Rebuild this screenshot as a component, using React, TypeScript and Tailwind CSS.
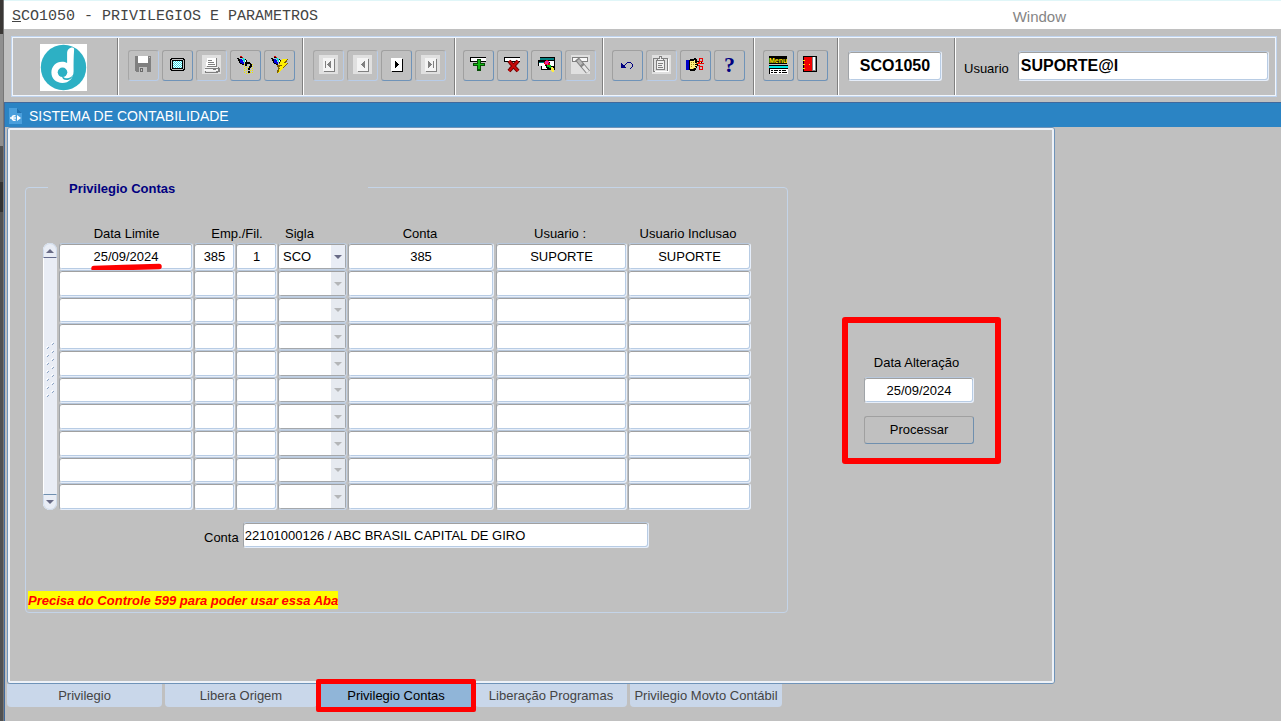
import type { ReactNode } from "react";

type Row = {
  dataLimite: string;
  empresa: string;
  filial: string;
  sigla: string;
  conta: string;
  usuario: string;
  usuarioInclusao: string;
};

const EMPTY_ROW: Row = {
  dataLimite: "",
  empresa: "",
  filial: "",
  sigla: "",
  conta: "",
  usuario: "",
  usuarioInclusao: "",
};

const ROWS: Row[] = [
  {
    dataLimite: "25/09/2024",
    empresa: "385",
    filial: "1",
    sigla: "SCO",
    conta: "385",
    usuario: "SUPORTE",
    usuarioInclusao: "SUPORTE",
  },
  ...Array.from({ length: 9 }, () => EMPTY_ROW),
];

const TABS = [
  { label: "Privilegio", active: false },
  { label: "Libera Origem", active: false },
  { label: "Privilegio Contas", active: true },
  { label: "Liberação Programas", active: false },
  { label: "Privilegio Movto Contábil", active: false },
];

const FIELD =
  "block rounded-[3px] border border-t-[#b8c8dc] border-l-[#a0a4a8] border-r-[#e6eefa] border-b-[#e6eefa] bg-white text-black shadow-[inset_0_1px_0_#a0a0a0,inset_-1px_-1px_0_#b8cce4] outline-none";

const GROUP = "flex shrink-0 gap-[3px] border-r border-white pt-3 shadow-[inset_-1px_0_0_#808080]";

function Icon({ children, disabled }: { children: ReactNode; disabled?: boolean }) {
  return (
    <svg className="block h-[19px] w-[19px]" viewBox="0 0 19 19" fill="none" shapeRendering="crispEdges" aria-hidden="true">
      {disabled && <path fill="#e0e0e0" d="M0 0h19v19H0z" />}
      {children}
    </svg>
  );
}

function ToolButton({ label, disabled, children }: { label: string; disabled?: boolean; children: ReactNode }) {
  return (
    <button
      type="button"
      title={label}
      aria-label={label}
      disabled={disabled}
      className={
        disabled
          ? "flex h-[31px] w-[31px] items-center justify-center rounded-[3px] border border-t-[#a6a6a6] border-l-[#a6a6a6] border-r-[#b8cce8] border-b-[#b8cce8] pb-[2px]"
          : "flex h-[31px] w-[31px] items-center justify-center rounded-[3px] border border-t-[#a0a0a0] border-l-[#a0a0a0] border-r-[#6f93b8] border-b-[#6f93b8] pb-[2px]"
      }
    >
      {children}
    </button>
  );
}

function Flashlight() {
  return (
    <>
      <path fill="#000" d="M1 3h2v1H1zM2 4h2v2H2zM3 6h1v2H3zM4 8h2v1H4zM6 9h2v1H6zM4 2h2v1H4zM8 4h2v1H8zM10 5h1v3h-1zM9 7h1v2H9z" />
      <path fill="#e00000" d="M4 1h2v1H4zM6 2h1v1H6z" />
      <path fill="#0000e0" d="M4 4h2v1h1v2h1v2H6V8H4z" />
      <path fill="#00e0e0" d="M6 3h2v1h1v3H8V6H7V4H6z" />
      <path fill="#fff" d="M9 5h1v2H9z" />
    </>
  );
}

// White key cap used by the record navigation buttons
function NavIcon({ glyph, disabled }: { glyph: string; disabled?: boolean }) {
  return (
    <Icon disabled={disabled}>
      <path fill={disabled ? "#808080" : "#000"} d="M5 4h11v13H5z" />
      <path fill={disabled ? "#f4f4f4" : "#fff"} d="M4 3h11v13H4z" />
      <path fill={disabled ? "#808080" : "#000"} d={glyph} />
    </Icon>
  );
}

function Logo() {
  return (
    <svg className="h-[47px] w-[47px] bg-white" viewBox="0 0 47 47" role="img" aria-label="Logotipo">
      <circle cx="23.5" cy="23.5" r="22.7" fill="#2db0c4" />
      <path
        fill="#fff"
        d="M32.5 3.6c1.3 0 1.8 1.2 1.6 2.6-.5 5.600-.6 13.800-.5 20.800 0 7.200-4.600 12-11.200 12-6.400 0-11-4.400-11-10.400 0-6.200 4.600-10.800 10.600-10.800 2 0 3.600.4 5.100 1.200V9.500c0-3.300 2-5.900 5.400-5.900z"
      />
      <circle cx="22.500" cy="28.300" r="4.800" fill="#2db0c4" />
      <path d="M22 31.700c2.200 2.600 5.400 3.200 8 1.800 2-.9 3-2.300 3.600-3.700-.8 3.600-3.200 6.200-7 6.300-3 0-4.600-1.700-4.600-4.400z" fill="#2db0c4" />
    </svg>
  );
}

function MenuBar() {
  return (
    <nav className="flex h-[29px] items-center justify-between border-t border-[#e0f6f8] bg-white pt-[3px] pr-[215px] pl-2">
      <button type="button" className="font-['Liberation_Mono',monospace] text-[15px] leading-5 text-[#444]">
        <span className="underline">S</span>CO1050 - PRIVILEGIOS E PARAMETROS
      </button>
      <button type="button" className="text-[15px] leading-5 text-[#858585]">
        Window
      </button>
    </nav>
  );
}

function Toolbar() {
  return (
    <div className="pt-[7px] pr-[4px] pb-[5px] pl-[7px]">
      <div className="border border-[#c0d4ee]">
        <div className="flex h-[59px] border border-[#f0f5fc]">
          <div className="flex w-[106px] shrink-0 items-start justify-center border-r border-white pt-[6px] pr-[4px] shadow-[inset_-1px_0_0_#808080]">
            <Logo />
          </div>

          <div className={`${GROUP} w-[185px] pl-[9px]`}>
            <ToolButton label="Salvar" disabled>
              <Icon>
                <path fill="#808080" d="M1 1h16v16H2v-1H1z" />
                <path fill="#fff" d="M4 1h10v7H4z" />
                <path fill="#c0c0c0" d="M15 2h1v1h-1zM5 12h8v5H5z" />
                <path fill="#6a6a6a" d="M6 13h3v4H6z" />
                <path fill="#c0c0c0" d="M7 14h1v2H7z" />
              </Icon>
            </ToolButton>
            <ToolButton label="Tela">
              <Icon>
                <path fill="#000" d="M3 3h13v1h1v11h-1v1H3v-1H2V4h1z" />
                <path fill="#c0c0c0" d="M4 4h11v1h1v9h-1v1H4v-1H3V5h1z" />
                <path fill="#000" d="M4 5h11v9H4z" />
                <path fill="#fff" d="M5 6h9v7H5z" />
                <path
                  fill="#30dce8"
                  d="M5 6h1v1H5zM7 6h1v1H7zM9 6h1v1H9zM11 6h1v1h-1zM13 6h1v1h-1zM6 7h1v1H6zM8 7h1v1H8zM10 7h1v1h-1zM12 7h1v1h-1zM5 8h1v1H5zM7 8h1v1H7zM9 8h1v1H9zM11 8h1v1h-1zM13 8h1v1h-1zM6 9h1v1H6zM8 9h1v1H8zM10 9h1v1h-1zM12 9h1v1h-1zM5 10h1v1H5zM7 10h1v1H7zM9 10h1v1H9zM11 10h1v1h-1zM13 10h1v1h-1zM6 11h1v1H6zM8 11h1v1H8zM10 11h1v1h-1zM12 11h1v1h-1zM5 12h1v1H5zM7 12h1v1H7zM9 12h1v1H9zM11 12h1v1h-1zM13 12h1v1h-1z"
                />
              </Icon>
            </ToolButton>
            <ToolButton label="Imprimir" disabled>
              <Icon disabled>
                <path fill="#808080" d="M5 3h10v9H5z" />
                <path fill="#fff" d="M5 3h9v8H4V7h1z" />
                <path fill="#808080" d="M6 5h4v1H6zM6 7h6v1H6zM6 9h7v1H6zM3 12h14v1h1v4H3z" />
                <path fill="#f4f4f4" d="M3 12h13v1H3zM2 14h14v2H2z" />
                <path fill="#808080" d="M11 14h3v1h-3zM3 16h13v2H3z" />
                <path fill="#e8e8e8" d="M4 16h10v1H4z" />
              </Icon>
            </ToolButton>
            <ToolButton label="Entrar consulta">
              <Icon>
                <Flashlight />
                <path fill="#f0e800" d="M8 9h1v1H8zM8 11h1v1H8zM8 13h1v1H8zM8 15h1v1H8zM8 17h1v1H8zM10 12h1v1h-1zM10 14h1v1h-1zM10 16h1v1h-1zM10 18h1v1h-1zM12 12h1v1h-1zM12 18h1v1h-1zM14 15h1v1h-1zM14 17h1v1h-1zM16 9h1v1h-1zM16 11h1v1h-1zM16 13h1v1h-1zM16 15h1v1h-1zM16 17h1v1h-1z" />
                <path fill="#000" d="M10 7h4v1h1v1h1v3h-1v1h-1v2h-2v-2h1v-2h1V9h-3v2H9V8h1zM12 16h2v2h-2z" />
              </Icon>
            </ToolButton>
            <ToolButton label="Executar consulta">
              <Icon>
                <Flashlight />
                <path fill="#806000" d="M12 4h6v1h-1v2h-1v1h2v1h-1v1h-1v1h-1v1h-1v1h-1v1h-2v2H9v2H7v-3h1v-3H7V10h2V8h1V6h1V5h1z" />
                <path fill="#ffee00" d="M12 4h5l-3 4h3l-5 5h2l-6 5 2-5H8l2-2h2v-1H9z" />
              </Icon>
            </ToolButton>
          </div>

          <div className={`${GROUP} w-[152px] pl-[9px]`}>
            <ToolButton label="Primeiro registro" disabled>
              <NavIcon disabled glyph="M6 6h1v7H6zM11 6h1v7h-1zM10 7h1v5h-1zM9 8h1v3H9zM8 9h1v1H8z" />
            </ToolButton>
            <ToolButton label="Registro anterior" disabled>
              <NavIcon disabled glyph="M11 6h1v7h-1zM10 7h1v5h-1zM9 8h1v3H9zM8 9h1v1H8z" />
            </ToolButton>
            <ToolButton label="Próximo registro">
              <NavIcon glyph="M8 6h1v7H8zM9 7h1v5H9zM10 8h1v3h-1zM11 9h1v1h-1z" />
            </ToolButton>
            <ToolButton label="Último registro" disabled>
              <NavIcon disabled glyph="M7 6h1v7H7zM8 7h1v5H8zM9 8h1v3H9zM10 9h1v1h-1zM12 6h1v7h-1z" />
            </ToolButton>
          </div>

          <div className={`${GROUP} w-[148px] pl-[7px]`}>
            <ToolButton label="Inserir registro">
              <Icon>
                <path fill="#000" d="M1 2h16v5H1z" />
                <path fill="#fff" d="M2 3h15v3H2z" />
                <path fill="#064d06" d="M8 4h4v4h4v3h-4v5H8v-5H4V8h4z" />
                <path fill="#12b812" d="M9 5h2v4h4v1h-4v4H9v-4H5V9h4z" />
              </Icon>
            </ToolButton>
            <ToolButton label="Excluir registro">
              <Icon>
                <path fill="#000" d="M1 2h16v5H1z" />
                <path fill="#fff" d="M2 3h15v3H2z" />
                <g shapeRendering="auto">
                  <path stroke="#700000" strokeWidth="4" d="M6 6l9 10M15 6L6 16" />
                  <path stroke="#c80808" strokeWidth="2" d="M6 6l9 10M15 6L6 16" />
                </g>
              </Icon>
            </ToolButton>
            <ToolButton label="Limpar registro">
              <Icon>
                <path fill="#000" d="M3 2h15v13H4v-4H1V5h2z" />
                <path fill="#008080" d="M3 3h14v2H3zM2 7h7v1H2z" />
                <path fill="#fff" d="M2 8h5l3 6H5v-3H2zM12 6h5v5h-3z" />
                <path fill="#fff" d="M5 11h4v3H5z" />
                <path fill="#f020a0" d="M8 6h4v4H8z" />
                <path fill="#e00000" d="M7 7h1v2H7zM9 5h2v1H9zM11 8h2v2h-2zM8 9h2v1H8z" />
                <path fill="#00c020" d="M10 10h4v3h-2v-1h-2z" />
                <path fill="#000" d="M9 10h1v2H9zM10 12h2v1h-2zM12 13h2v2h-2z" />
                <path fill="#ffee40" d="M14 12h2v1h1v4h-2v-1h-1z" />
              </Icon>
            </ToolButton>
            <ToolButton label="Limpar bloco" disabled>
              <Icon disabled>
                <path fill="#808080" d="M1 2h16v5H1z" />
                <path fill="#f8f8f8" d="M2 3h14v3H2z" />
                <g shapeRendering="auto">
                  <path stroke="#808080" strokeWidth="5" d="M6 4l11 13" />
                  <path stroke="#b8b8b8" strokeWidth="3" d="M7 5l4 5" />
                  <path stroke="#e8e8e8" strokeWidth="3" d="M12 11l5 6" />
                  <path stroke="#808080" d="M9 11l4-3" />
                </g>
              </Icon>
            </ToolButton>
          </div>

          <div className={`${GROUP} w-[151px] pl-[8px]`}>
            <ToolButton label="Desfazer">
              <Icon>
                <path fill="#000080" d="M3 8h1v1h1v1h1v1h1v1h1v1H3zM6 10h1V9h1V8h1V7h4v1h1v1h1v3h-1v1h-1v1h-1v-1h1v-1h1V9h-1V8H9v1H8v1H7v1H6z" />
              </Icon>
            </ToolButton>
            <ToolButton label="Colar" disabled>
              <Icon disabled>
                <path stroke="#808080" d="M1.500 3.500h14v13h-14z" />
                <path fill="#fff" d="M16 4h1v13H3v-1h13z" />
                <path stroke="#808080" fill="#f0f0f0" d="M4.500 5.500h8v9h-8zM5.500 5.500v-2h2v-2h2v2h2v2z" />
                <path fill="#808080" d="M6 8h5v1H6zM6 10h4v1H6zM6 12h5v1H6z" />
              </Icon>
            </ToolButton>
            <ToolButton label="Lista de valores">
              <Icon>
                <path fill="#0000c8" d="M0 5h3v10H0z" />
                <path fill="#000" d="M3 5h1V4h4V3h2v1h1v2h5v3h-4v2h-1v2h-1v2h-1v1H4v-1H3z" />
                <path fill="#fff080" d="M4 6h4V5h1v3h6v-1h-4v2h-2v1h2v1H9v1h1v1H8v1H4z" />
                <path fill="#a09010" d="M5 7h1v1H5zM7 9h1v1H7zM5 11h1v1H5zM7 13h1v1H7zM7 7h1v1H7zM5 9h1v1H5zM10 8h1v1h-1zM12 7h1v1h-1z" />
                <path stroke="#f00000" d="M13.500 3.500h3v3h-3zM13.500 11.500h3v3h-3z" />
                <path fill="#f00000" d="M12 7h2v1h-2zM11 8h7v1h-7zM12 10h2v1h-2z" />
              </Icon>
            </ToolButton>
            <ToolButton label="Ajuda">
              <span className="font-['Liberation_Serif',serif] text-[22px] leading-5 font-bold text-[#000080]">?</span>
            </ToolButton>
          </div>

          <div className={`${GROUP} w-[84px] pl-[8px]`}>
            <ToolButton label="Menu">
              <Icon>
                <path fill="#000" d="M0 1h18v8H0z" />
                <text x="0" y="8" className="fill-[#ffee00] font-['Liberation_Sans',sans-serif] text-[7px] font-bold">
                  Menu
                </text>
                <path fill="#000" d="M0 10h19v9H0z" />
                <path fill="#00e8e8" d="M0 11h19v2H0z" />
                <path fill="#fff" d="M1 14h18v5H1z" />
                <path fill="#000" d="M2 15h2v1H2zM5 15h4v1H5zM10 15h2v1h-2zM13 15h4v1h-4zM2 17h2v1H2zM5 17h3v1H5zM10 17h2v1h-2zM13 17h5v1h-5z" />
              </Icon>
            </ToolButton>
            <ToolButton label="Sair">
              <Icon>
                <path fill="#000" d="M0 1h14v16H0z" />
                <path fill="#808080" d="M9 2h4v14H9z" />
                <path fill="#fff" d="M10 2h2v13h-2z" />
                <path fill="#f00000" d="M1 2h8v14H1z" />
                <path fill="#ffe000" d="M0 5h2v1H0zM0 9h2v1H0zM0 13h2v1H0zM6 9h1v1H6z" />
              </Icon>
            </ToolButton>
          </div>

          <div className="flex w-[117px] shrink-0 items-start border-r border-white pt-[13px] pl-[9px] shadow-[inset_-1px_0_0_#808080]">
            <input
              aria-label="Programa"
              readOnly
              defaultValue="SCO1050"
              className={`${FIELD} h-[30px] w-[94px] text-center text-[16px] font-bold`}
            />
          </div>

          <div className="flex min-w-0 flex-1 items-start gap-[9px] pt-[13px] pr-[6px] pl-[8px]">
            <label htmlFor="usuario" className="pt-2 text-[13px] leading-5">
              Usuario
            </label>
            <input
              id="usuario"
              readOnly
              defaultValue="SUPORTE@l"
              className={`${FIELD} h-[30px] min-w-0 flex-1 pl-[2px] text-[16px] font-bold`}
            />
          </div>
        </div>
      </div>
    </div>
  );
}

function TitleBar() {
  return (
    <header className="flex h-[25px] items-center gap-[7px] border-t border-[#41699c] bg-[#2b84c4] pt-px pl-1">
      <svg className="h-4 w-[13px]" viewBox="0 0 13 16" aria-hidden="true">
        <path fill="#4a9fdc" d="M0 0h8l5 5v11H0z" />
        <path fill="#2272b0" d="M8 0l5 5H8z" />
        <path fill="#fff" d="M8 7l4 3-4 3z" />
        <path stroke="#fff" strokeWidth="1.500" fill="none" d="M6.500 8A2.300 2.300 0 1 0 6.500 12M1 10h6" />
      </svg>
      <h1 className="text-[14px] leading-5 text-white">SISTEMA DE CONTABILIDADE</h1>
    </header>
  );
}

function ScrollBar() {
  return (
    <div className="mt-[19px] flex h-[267px] w-[14px] shrink-0 flex-col rounded-full bg-[#e9edf5] shadow-[inset_1px_0_0_#fff]">
      <button type="button" aria-label="Rolar para cima" className="flex h-[15px] items-center justify-center rounded-t-full border border-[#d0dcec] border-b-[#646b8c]">
        <svg className="h-[4px] w-[8px]" viewBox="0 0 8 4" aria-hidden="true">
          <path fill="#686b86" d="M0 4l4-4 4 4z" />
        </svg>
      </button>
      <div className="flex flex-1 items-center justify-center pb-2">
        <svg className="h-[60px] w-[8px]" viewBox="0 0 8 60" aria-hidden="true">
          {[0, 1, 2, 3, 4, 5, 6].map((i) => (
            <g key={i} fill="none" strokeWidth="1">
              <path stroke="#fff" d={`M5 ${i * 8 + 2}l2-2M0 ${i * 8 + 6}l2-2`} />
              <path stroke="#8ca4c4" d={`M6 ${i * 8 + 3}l2-2M1 ${i * 8 + 7}l2-2`} />
            </g>
          ))}
        </svg>
      </div>
      <button type="button" aria-label="Rolar para baixo" className="flex h-[16px] items-center justify-center rounded-b-full border border-[#d0dcec] border-t-[#7090b0]">
        <svg className="h-[4px] w-[8px]" viewBox="0 0 8 4" aria-hidden="true">
          <path fill="#686b86" d="M0 0h8L4 4z" />
        </svg>
      </button>
    </div>
  );
}

function Cell({ label, value }: { label: string; value: string }) {
  return <input aria-label={label} defaultValue={value} className={`${FIELD} h-[27px] w-full text-center text-[13px]`} />;
}

function SiglaSelect({ value }: { value: string }) {
  return (
    <div className="relative">
      <select
        aria-label="Sigla"
        defaultValue={value}
        disabled={!value}
        className="block h-[27px] w-full appearance-none rounded-[3px] border border-t-[#b8c8dc] border-r-[#c4d2e4] border-b-[#c4d2e4] border-l-[#a0a4a8] bg-white pl-1 text-[13px] text-black opacity-100 shadow-[inset_0_1px_0_#a0a0a0,inset_-1px_-1px_0_#a4a8ac] outline-none"
      >
        <option value={value}>{value}</option>
      </select>
      <span
        className={
          value
            ? "pointer-events-none absolute top-[2px] right-[2px] bottom-[2px] flex w-[14px] items-center justify-center bg-[#e9edf5]"
            : "pointer-events-none absolute top-[2px] right-[2px] bottom-[2px] flex w-[14px] items-center justify-center bg-[#e6eaf0]"
        }
      >
        <svg className="h-[4px] w-[8px]" viewBox="0 0 8 4" aria-hidden="true">
          <path fill={value ? "#686b86" : "#b4b6b8"} d="M0 0h8L4 4z" />
        </svg>
      </span>
    </div>
  );
}

function ContasTable() {
  return (
    <table className="w-[693px] table-fixed border-collapse text-[13px]">
      <colgroup>
        <col className="w-[135px]" />
        <col className="w-[42px]" />
        <col className="w-[42px]" />
        <col className="w-[70px]" />
        <col className="w-[148px]" />
        <col className="w-[132px]" />
        <col className="w-[124px]" />
      </colgroup>
      <thead>
        <tr className="h-[19px] leading-[18px]">
          <th className="p-0 font-normal">Data Limite</th>
          <th className="p-0 pl-[2px] font-normal" colSpan={2}>
            Emp./Fil.
          </th>
          <th className="p-0 pl-[7px] text-left font-normal">Sigla</th>
          <th className="p-0 pr-1 font-normal">Conta</th>
          <th className="p-0 pr-1 font-normal">Usuario :</th>
          <th className="p-0 pr-1 font-normal">Usuario Inclusao</th>
        </tr>
      </thead>
      <tbody>
        {ROWS.map((row, i) => (
          <tr key={i} className="h-[27px] nth-[3n]:h-[26px] nth-[3n]:[&_input]:h-[26px] nth-[3n]:[&_select]:h-[26px]">
            <td className="relative p-0 pr-px align-top">
              <Cell label="Data Limite" value={row.dataLimite} />
              {i === 0 && (
                <svg className="pointer-events-none absolute top-[20px] left-[31px] h-[9px] w-[73px]" viewBox="0 0 73 9" aria-hidden="true">
                  <path stroke="#ff0000" strokeWidth="5.500" strokeLinecap="round" d="M4 5.500l30-1 35-1" />
                </svg>
              )}
            </td>
            <td className="p-0 pr-px align-top">
              <Cell label="Empresa" value={row.empresa} />
            </td>
            <td className="p-0 pr-px align-top">
              <Cell label="Filial" value={row.filial} />
            </td>
            <td className="p-0 pr-px align-top">
              <SiglaSelect value={row.sigla} />
            </td>
            <td className="p-0 pr-[2px] align-top">
              <Cell label="Conta" value={row.conta} />
            </td>
            <td className="p-0 pr-px align-top">
              <Cell label="Usuario" value={row.usuario} />
            </td>
            <td className="p-0 pr-px align-top">
              <Cell label="Usuario Inclusao" value={row.usuarioInclusao} />
            </td>
          </tr>
        ))}
      </tbody>
    </table>
  );
}

function PrivilegioContas() {
  return (
    <fieldset className="w-[763px] shrink-0 rounded-[4px] border border-[#c4d4e8] pb-[3px]">
      <legend className="ml-[22px] h-[18px] w-[320px] pl-[21px] text-[13px] leading-[22px] font-bold text-[#000080]">
        Privilegio Contas
      </legend>
      <div className="flex gap-[2px] pt-7 pl-[17px]">
        <ScrollBar />
        <ContasTable />
      </div>
      <div className="mt-3 flex gap-[4px] pl-[178px]">
        <label htmlFor="conta-descricao" className="pt-[6px] text-[13px] leading-5">
          Conta
        </label>
        <input
          id="conta-descricao"
          readOnly
          defaultValue="22101000126 / ABC BRASIL CAPITAL DE GIRO"
          className={`${FIELD} h-[26px] w-[406px] pl-px text-[13px]`}
        />
      </div>
      <p className="mt-[43px] ml-[2px] h-[18px] w-fit bg-[#ffff00] text-[13px] leading-[20px] font-bold text-[#ff0000] italic">
        Precisa do Controle 599 para poder usar essa Aba
      </p>
    </fieldset>
  );
}

function DataAlteracao() {
  return (
    <div className="mt-[139px] ml-[54px] flex w-[159px] shrink-0 flex-col rounded-[3px] border-6 border-[#ff0000] pt-[30px] pr-[21px] pb-[14px] pl-[16px] text-[13px]">
      <label htmlFor="data-alteracao" className="pr-[5px] text-center leading-5">
        Data Alteração
      </label>
      <input
        id="data-alteracao"
        defaultValue="25/09/2024"
        className={`${FIELD} mt-[4px] h-[26px] w-full text-center text-[13px]`}
      />
      <button
        type="button"
        className="mt-[13px] h-7 w-full rounded-[3px] border border-t-[#a0a0a0] border-l-[#a0a0a0] border-r-[#6f8fae] border-b-[#6f8fae] text-[13px]"
      >
        Processar
      </button>
    </div>
  );
}

function Tabs() {
  return (
    <div role="tablist" className="flex gap-[3px] text-[13px] text-[#444]">
      {TABS.map((tab) => (
        <button
          key={tab.label}
          type="button"
          role="tab"
          aria-selected={tab.active}
          className={
            tab.active
              ? "relative z-10 h-[23px] w-[152px] bg-[#90b5d8] text-black"
              : "h-[23px] w-[152px] rounded-b-[4px] bg-[#c9d7ea] first:w-[155px]"
          }
        >
          {tab.label}
          {tab.active && (
            <span className="pointer-events-none absolute -inset-x-1 -inset-y-[5px] rounded-[2px] border-[5px] border-[#ff0000]" />
          )}
        </button>
      ))}
    </div>
  );
}

export default function App() {
  return (
    <div className="flex min-h-screen bg-[#c0c0c0] font-['Liberation_Sans',Arial,sans-serif] text-black">
      <div className="flex w-1 shrink-0 flex-col border-r border-[#777] bg-[#525252]">
        <div className="h-[34px] bg-[#3a3735]" />
        <div className="h-[112px] bg-[#8f8f8f]" />
        <div className="mt-9 h-[30px] bg-[#333]" />
      </div>
      <div className="min-w-0 flex-1">
        <MenuBar />
        <Toolbar />
        <div className="border-l border-[#41699c]">
          <TitleBar />
          <main className="pr-[226px] pb-[14px] pl-[2px]">
            <div className="rounded-[3px] border border-[#6f93b8]">
              <div className="flex items-start rounded-[2px] border-2 border-[#eef2f8] pt-12 pb-[68px] pl-[15px]">
                <PrivilegioContas />
                <DataAlteracao />
              </div>
            </div>
            <Tabs />
          </main>
        </div>
      </div>
    </div>
  );
}
